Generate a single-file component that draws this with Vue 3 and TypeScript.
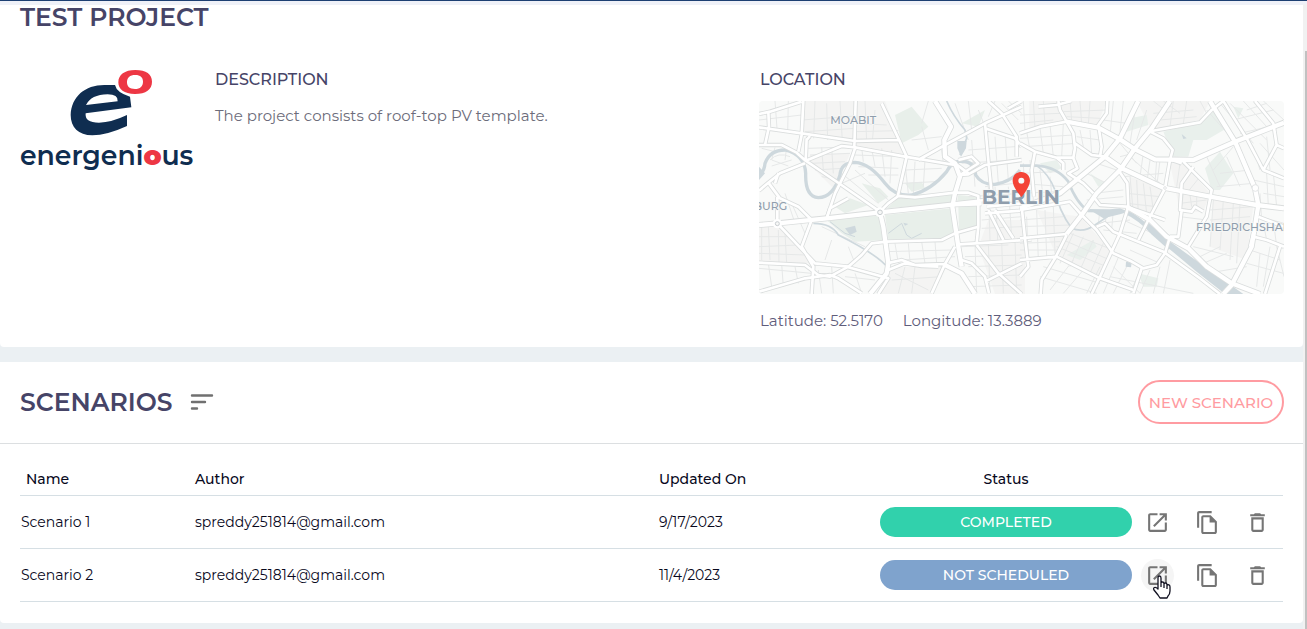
<script setup lang="ts">
interface Scenario {
  name: string
  author: string
  updated: string
  status: string
  tone: string
  active: boolean
}

const scenarios: Scenario[] = [
  { name: 'Scenario 1', author: 'spreddy251814@gmail.com', updated: '9/17/2023', status: 'COMPLETED', tone: 'done', active: false },
  { name: 'Scenario 2', author: 'spreddy251814@gmail.com', updated: '11/4/2023', status: 'NOT SCHEDULED', tone: 'idle', active: true },
]

// Street geometry, split in a western and an eastern sheet.
const westMinor: string[] = [
  'M60 123L66 205M100 123L98 215M180 123L176 235M215 130L218 240M255 123L262 243M12 180L140 165M140 180L300 168M150 215L300 205',
  'M330 123L335 245M360 150L352 245M300 190L395 195M300 215L430 212M20 265L60 275M60 262L50 300L100 318M95 262L90 300M45 300Q70 275 105 290M50 318L110 300',
  'M160 265L250 262M165 285L285 280M200 262L205 330M230 262L235 340M170 310L270 305M180 330L262 325M320 262L325 305M350 265L360 320M380 265L390 350M410 270L405 370M300 285L440 290M310 320L430 325M340 345L430 345',
  'M200 350L260 360M260 340L370 430M300 330L400 420M260 370L330 340M450 310L460 400M480 305L475 400M510 300L505 380M450 330L560 325M440 370L540 365',
  'M20 500L20 600M40 500L45 600M70 510L72 610M90 520L95 610M12 530L110 530M12 560L130 555M12 580L150 585M110 430L150 520M90 400L120 490',
  'M200 500L330 560M230 540L210 600M280 560L300 610M12 625L170 640M40 610L50 680M80 612L85 680M120 620L130 670M190 630L200 700M230 620L235 700M300 640L320 700M270 650L360 660',
  'M420 550L430 610M460 550L465 605M500 545L510 610M540 545L545 610M390 575L590 570M420 640L520 690M450 620L430 700M480 620L470 700M410 660L560 650M440 600L600 590',
  'M620 560L760 555M630 590L800 585M640 620L800 615M660 550L665 700M700 545L705 700M740 545L745 700M780 540L785 700M640 650L800 645M640 680L800 675',
  'M640 410L800 400M700 380L705 540M720 380L728 540M760 380L770 530M680 430L800 425M680 480L800 470M680 505L800 500M690 380L780 370M620 310L780 300M640 270L780 260M650 240L660 380M720 230L730 370M750 220L760 360',
  'M640 123L650 210M670 150L690 200M600 130L640 240M720 123L700 170M740 130L790 180M760 123L800 160M560 270L565 310M500 200L520 270M470 240L560 230M520 123L500 190',
]
const eastMinor: string[] = [
  'M10 123L15 215M40 123L45 205M70 123L75 195M0 165L120 160M0 190L100 180M150 123L155 180M180 123L185 190M210 123L205 195M130 155L260 150M140 170L240 175M280 123L270 225M310 123L300 215M250 180L320 190',
  'M20 215L30 270M60 205L70 280M90 195L100 290M130 190L125 290M0 235L160 225M10 260L170 250M180 210L190 260M210 210L215 280M170 230L240 240M350 123L330 250M380 150L350 240M400 123L440 155M430 123L480 160M400 160L520 150M420 180L530 170M460 123L450 200M500 123L490 190M540 123L560 160',
  'M300 250L350 310M330 290L420 370M370 280L360 350M390 300L380 370M420 300L410 380M300 290L340 280M310 350L430 340M230 310L290 330M200 340L260 370M170 350L230 400M330 350L340 460M350 360L355 460M370 370L380 460M390 380L400 450M320 400L420 410M320 430L410 440',
  'M10 310L15 420M30 300L40 420M60 330L70 420M90 350L95 400M0 340L110 335M0 370L130 380M0 400L110 395M20 470L25 600M50 450L55 600M75 450L80 590M100 440L105 580M0 480L130 470M0 500L150 495M0 550L120 545M0 570L110 570',
  'M120 610L160 520M150 620L190 530M180 630L220 540M210 640L250 550M110 560L260 620M130 540L270 600M150 520L280 570M70 620L240 670M60 650L230 700M90 690L160 600M130 700L190 630M200 700L240 620',
  'M240 450L235 490M260 450L255 500M280 450L275 510M200 420L310 410M220 400L310 390M240 490L330 480M250 510L350 520M310 480L420 530M330 570L420 610M280 620L360 700M300 580L250 700M330 600L280 700M360 630L330 700M390 630L360 700M420 620L400 700M450 600L430 700M270 650L520 700',
  'M410 300L405 370M480 310L470 380M510 330L480 390M540 350L500 400M490 400L485 440M510 405L515 440M530 410L530 450M480 430L560 420M480 470L560 480M580 420L570 560M610 420L600 570M640 430L630 600M660 430L650 610M570 450L700 440M570 480L690 470',
  'M590 380L700 370M600 340L690 330M580 330L640 260M620 290L660 380M650 270L690 360M560 290L600 380M560 150L640 240M600 130L700 250M630 130L740 240M670 123L740 200M700 123L770 200M730 123L792 180M680 150L740 130M640 180L760 150M660 220L790 190M700 260L720 330M720 250L792 330M740 230L750 330',
  'M720 400L725 480M740 340L745 440M760 340L770 440M700 360L792 380M730 400L792 410M720 470L792 490M730 490L740 540M760 480L770 560M720 580L710 680M750 560L730 680M770 560L792 650M690 570L780 600M680 610L790 640M520 560L640 590M540 590L600 560M550 610L620 580M560 640L680 620',
]
const westMajor: string[] = [
  'M12 162L45 155L140 125M40 155L42 200L30 255M12 202L140 220L300 243L435 240M145 123L140 225L130 275M302 123L298 260M380 130L430 235L455 290L428 410',
  'M12 255L80 255L125 278L152 302L255 372L375 455M152 302L155 235M165 228L155 240M152 302L260 258L300 262L450 290L600 315M300 265L285 310L240 400L215 475M490 300L570 255L690 190L800 140',
  'M12 392L40 368L75 340L150 310M40 368L75 415L130 440L170 480L140 560L175 620L170 702M70 340L60 370M67 410L67 490L180 610L280 620M215 475L225 445L280 415',
  'M395 545L350 550L320 585L280 620L225 650L190 645L150 615L12 608M12 695L150 655L225 645L250 655L320 700M280 622L400 655L370 702M395 545L560 540L600 520L670 500',
  'M395 610L440 600L480 615L570 612L600 560M400 630L450 610L500 618L550 620M570 612L530 700M610 553L700 548L830 538M620 600L650 610L690 650L702 700M665 555L730 640L800 702M690 665L800 610',
  'M375 455L400 430L430 408L480 412L600 398L640 398L670 408L670 500L665 550M600 430L690 420M695 440L800 430M690 460L800 452M700 450L745 540M720 450L775 535',
  'M615 345L640 343L690 315L800 300M610 300L650 290L670 310L615 345M690 190L700 300L710 400M690 205L720 215L780 235L800 260M700 123L740 160L785 230L785 290M760 145L800 123M640 340L600 310',
]
const westWide: string[] = [
  'M12 495L70 490L215 475L375 457L600 433L680 430',
  'M375 457L385 500L400 610L395 640L345 702M540 123L588 200L568 240L570 290L600 310L615 350L600 400L592 440L610 560L620 620',
  'M570 615L620 640L660 702',
]
const eastMajor: string[] = [
  'M0 220L60 200L140 185M55 140L110 135L155 123M115 123L120 150L160 220L165 265L160 293L110 293M0 250L45 275L110 293L130 310L130 330M45 275L35 330L42 410M262 123L260 160L235 195L245 260L240 290M165 250L215 285L255 290M160 295L172 325L145 340L190 370L220 400',
  'M0 450L120 430L150 425L185 465M185 465L230 510L280 580L330 602L370 625L410 615L435 580L450 530M220 410L240 435L320 440L435 480M295 330L322 370L325 440L300 520L240 650L215 702',
  'M230 500L255 490L280 515L430 575L540 655L600 702M0 600L110 590L240 655L340 690M140 525L105 595L65 660L62 702M0 535L140 522M5 440L15 535L25 620L0 650',
  'M390 215L430 235L458 270L450 300L435 385L385 480L355 540M490 305L575 390L560 470L505 560M485 450L475 530L450 530M455 300L485 310M520 320L485 370L480 450L515 455L525 440L550 455',
  'M395 213L540 187L575 150L610 123M610 123L680 235L730 330L792 355M730 330L770 255L792 265M705 123L760 190L770 255M715 470L740 480L792 500M700 530L740 540L792 560M780 560L735 702M710 480L690 560M500 560L530 590M365 625L340 700',
]
const eastWide: string[] = [
  'M0 445L120 400L255 290L300 235L355 123M140 522L185 465L230 400L300 330L345 265L395 205L450 123',
  'M140 185L235 203L300 238L345 268L405 298L520 300L645 245L792 188',
  'M255 290L305 325L430 383L570 410L710 435L792 445M570 123L580 140L645 245L705 385L715 435L695 560L635 675L610 702',
  'M320 440L390 480L440 530L505 565L560 620L635 670L720 702',
]

const copyPath = 'M16 1H4c-1.100 0-2 .9-2 2v14h2V3h12V1zm-1 4l6 6v10c0 1.100-.9 2-2 2H7.990C6.890 23 6 22.100 6 21l.01-14c0-1.100.89-2 1.990-2h7z'
</script>

<template>
  <div class="page">
    <div class="topline"></div>
    <main class="content">
      <section class="card project">
        <h1 class="title">TEST PROJECT</h1>
        <div class="details">
          <svg class="logo" viewBox="0 0 555 345" role="img" aria-label="energenious">
            <path fill="#0f2d50" fill-rule="evenodd" d="M300 75Q305 98 345 110L349 142L212 160Q208 188 252 188Q290 187 336 165V198Q275 226 232 226C190 226 167 201 167 165C169 110 210 75 268 75ZM213 135L308 124Q310 103 278 103Q228 104 213 135Z" />
            <path fill="#ed3744" fill-rule="evenodd" d="M361 30C394 30 411 43 411 65C411 88 393 102 360 102C327 102 310 88 310 67C310 44 329 30 361 30ZM361 45C344 45 336 53 336 67C336 80 344 87 360 87C376 87 384 78 384 65C384 52 376 45 361 45Z" />
            <text class="wordmark" x="275" y="316" text-anchor="middle">energeni<tspan class="wordmark-o">o</tspan>us</text>
          </svg>
          <div class="description">
            <h2 class="label">DESCRIPTION</h2>
            <p class="copy">The project consists of roof-top PV template.</p>
          </div>
          <div class="location">
            <h2 class="label">LOCATION</h2>
            <svg class="map" viewBox="0 0 1575 579" preserveAspectRatio="xMidYMid slice" role="img" aria-label="Map of Berlin">
              <rect width="1575" height="579" fill="#f9faf9" />
              <g transform="translate(-12 -123)">
                <path fill="#f4f4f3" d="M140 123H300V240L140 220ZM12 500L70 495L175 610L12 605ZM300 123H390L450 290L300 260ZM400 620L570 620L530 702H370ZM700 480H810V702H720L670 560ZM165 285L285 280L240 390L160 310Z" />
                <path fill="#e8efea" d="M420 165L470 140L520 200L490 225L440 250ZM240 440L285 415L340 435L270 460ZM215 480L370 465L390 540L300 545L260 520ZM390 465L590 445L600 520L560 535L400 540ZM610 440L668 435V495L612 515ZM440 405L600 400L595 428L395 445ZM610 405L665 410V425L605 430ZM320 370L375 385L400 410L370 430ZM620 190L690 150L670 200ZM450 370L500 365L510 385L470 395Z" />
                <g fill="none" stroke="#e6e8e8" stroke-width="3"><path v-for="d in westMinor" :key="d" :d="d" /></g>
                <g fill="none" stroke="#ced8dd" stroke-linejoin="round">
                  <path stroke-width="10" d="M12 345Q28 335 30 310Q45 270 90 270Q150 285 152 340Q150 410 190 413Q235 412 255 345Q258 307 300 307Q345 310 390 370Q420 410 470 405Q530 390 575 335Q590 303 620 303Q660 305 662 345Q680 375 720 373Q770 365 795 330" />
                  <path stroke-width="5" d="M575 123Q595 170 630 210L635 235L615 285M175 490Q230 490 250 525Q370 585 400 625" />
                  <path stroke-width="3" d="M225 485L270 520L300 530M400 520L440 490L455 525L470 535L500 520" />
                  <path fill="#ced8dd" stroke="none" d="M607 243H635L633 265L618 290L607 265ZM12 320L30 340L12 360ZM270 505L300 497L305 515L285 525ZM445 488L460 492L450 497Z" />
                </g>
                <g fill="none" stroke="#dadddd" stroke-width="13" stroke-linejoin="round"><path v-for="d in westMajor" :key="d" :d="d" /></g>
                <g fill="none" stroke="#dadddd" stroke-width="18" stroke-linejoin="round"><path v-for="d in westWide" :key="d" :d="d" /></g>
                <g fill="none" stroke="#fff" stroke-width="8" stroke-linejoin="round"><path v-for="d in westMajor" :key="d" :d="d" /></g>
                <g fill="none" stroke="#fff" stroke-width="13" stroke-linejoin="round"><path v-for="d in westWide" :key="d" :d="d" /></g>
                <g fill="#f7f8f7" stroke="#fff" stroke-width="12"><circle cx="375" cy="457" r="9" /><circle cx="67" cy="491" r="8" /></g>
                <g fill="#f7f8f7" stroke="#c8cdd0" stroke-width="3"><circle cx="375" cy="457" r="7" /><circle cx="67" cy="491" r="6" /></g>
              </g>
              <g transform="translate(783 -123)">
                <path fill="#f4f4f3" d="M28 123H260L230 200L140 185L28 210ZM350 123H570L540 180L395 210ZM330 350L430 385L390 470L325 440ZM50 450L180 470L280 580L240 650L110 590ZM450 310L490 310L570 400L550 455H480ZM580 410L700 435L680 600L570 560Z" />
                <path fill="#e9f0ec" d="M430 215L545 187L585 150L620 205L560 240L520 240L505 290H460ZM330 175L380 165L385 195L320 215ZM555 325L600 275L640 340L600 390H575ZM60 310L110 300L125 325L90 340ZM355 640L415 655L410 680L370 680ZM210 340L255 370L235 380ZM640 140L670 145L655 175ZM140 585L220 540L230 560L180 600Z" />
                <g fill="none" stroke="#e6e8e8" stroke-width="3"><path v-for="d in eastMinor" :key="d" :d="d" /></g>
                <g fill="none" stroke="#ced8dd">
                  <path stroke-width="8" d="M0 317H50Q110 320 145 365Q170 430 205 453L315 455" />
                  <path stroke-width="5" d="M50 317Q85 340 105 390Q115 450 155 505Q190 520 225 495L285 455" />
                  <path stroke-width="12" d="M315 455Q360 475 400 520L450 565" />
                </g>
                <path fill="#ced8dd" d="M205 447L270 448L300 445L325 455L300 463L250 475ZM375 480L455 548L540 610L670 702H615L530 635L440 560L370 495ZM318 605L335 608L333 622L317 620ZM485 222L500 235L490 237Z" />
                <g fill="none" stroke="#dadddd" stroke-width="13" stroke-linejoin="round"><path v-for="d in eastMajor" :key="d" :d="d" /></g>
                <g fill="none" stroke="#dadddd" stroke-width="18" stroke-linejoin="round"><path v-for="d in eastWide" :key="d" :d="d" /></g>
                <g fill="none" stroke="#fff" stroke-width="8" stroke-linejoin="round"><path v-for="d in eastMajor" :key="d" :d="d" /></g>
                <g fill="none" stroke="#fff" stroke-width="13" stroke-linejoin="round"><path v-for="d in eastWide" :key="d" :d="d" /></g>
                <g fill="#fff" stroke="#e3e5e6" stroke-width="3"><circle cx="435" cy="384" r="4" /><circle cx="706" cy="384" r="10" /></g>
              </g>
              <g class="places">
                <text x="214" y="68">MOABIT</text>
                <text x="-16" y="326">BURG</text>
                <text x="1311" y="389">FRIEDRICHSHAIN</text>
                <text class="city" x="668" y="309">BERLIN</text>
              </g>
              <path fill="#f44336" fill-rule="evenodd" d="M787 213C772 213 761 224 761 239C761 259 787 288 787 288C787 288 813 259 813 239C813 224 802 213 787 213ZM787 230A9 9 0 1 1 787 248A9 9 0 1 1 787 230Z" />
            </svg>
            <div class="coords"><span>Latitude: 52.5170</span><span>Longitude: 13.3889</span></div>
          </div>
        </div>
      </section>

      <section class="card scenarios">
        <header class="bar">
          <h2 class="title">SCENARIOS</h2>
          <button class="icon sort" type="button" aria-label="Sort scenarios">
            <svg width="24" height="24" viewBox="0 0 24 24" fill="none" stroke="#707070" stroke-width="2.400" stroke-linecap="round"><path d="M2 5.500H22M2 12H15M2 18.500H7" /></svg>
          </button>
          <button class="new" type="button">NEW SCENARIO</button>
        </header>
        <div class="table-wrap">
          <table>
            <colgroup><col class="c-name" /><col class="c-author" /><col class="c-date" /><col class="c-status" /><col class="c-actions" /></colgroup>
            <thead>
              <tr><th class="first">Name</th><th>Author</th><th>Updated On</th><th class="center">Status</th><td></td></tr>
            </thead>
            <tbody>
              <tr v-for="s in scenarios" :key="s.name">
                <td>{{ s.name }}</td>
                <td>{{ s.author }}</td>
                <td>{{ s.updated }}</td>
                <td><span class="pill" :class="s.tone">{{ s.status }}</span></td>
                <td>
                  <div class="actions">
                    <button class="icon round" :class="{ active: s.active }" type="button" :aria-label="'Open ' + s.name">
                      <svg width="25" height="25" viewBox="0 0 24 24" fill="#757575"><path d="M19 19H5V5h7V3H5c-1.110 0-2 .9-2 2v14c0 1.100.89 2 2 2h14c1.100 0 2-.9 2-2v-7h-2v7zM14 3v2h3.590l-9.830 9.830 1.410 1.410L19 6.410V10h2V3h-7z" /></svg>
                      <svg v-if="s.active" class="cursor" width="20" height="25" viewBox="0 0 20 25"><path fill="#fff" stroke="#101020" stroke-width="1.300" stroke-linejoin="round" d="M6 14V3Q6 1 7.500 1Q9 1 9 3V10V7.500Q12 6 12 9V11V8.500Q15 7 15 10V12V10Q18 9 18 12V16Q18 19 16 21L15 23H8L6 20L2 15Q1 13 2.500 12.500Q4 12 6 14ZM9 10V12M12 11V13M15 12V14" /></svg>
                    </button>
                    <button class="icon round" type="button" :aria-label="'Duplicate ' + s.name">
                      <svg width="25" height="25" viewBox="0 0 24 24" fill="#757575"><path fill-rule="evenodd" :d="copyPath + 'M8 7V21H19V12H14V7Z'" /></svg>
                    </button>
                    <button class="icon round" type="button" :aria-label="'Delete ' + s.name">
                      <svg width="25" height="25" viewBox="0 0 24 24" fill="#757575"><path d="M6 19c0 1.100.9 2 2 2h8c1.100 0 2-.9 2-2V7H6v12zM8 9h8v10H8V9zm7.500-5l-1-1h-5l-1 1H5v2h14V4h-3.500z" /></svg>
                    </button>
                  </div>
                </td>
              </tr>
            </tbody>
          </table>
        </div>
      </section>
    </main>
    <div class="scroll-track"><div class="scroll-thumb"></div></div>
  </div>
</template>

<style>
body {
  margin: 0;
  background: #ebf0f3;
}
</style>

<style scoped>
.page {
  position: relative;
  min-height: 100vh;
  overflow: hidden;
  background: #ebf0f3;
  color: #08081c;
  font-family: Montserrat, Inter, "Liberation Sans", sans-serif;
  font-size: 14px;
  line-height: 20px;
}
.topline {
  height: 4px;
  border-top: 1px solid #1d3f72;
  background: #eff1f8;
}
.content {
  display: flex;
  flex-direction: column;
  gap: 15px;
  margin-right: 4px;
}
.card {
  background: #fff;
  border-radius: 0 0 4px 4px;
}
h1, h2, p { margin: 0; }
.title {
  color: #464467;
  font-size: 25px;
  font-weight: 600;
  line-height: 32px;
}
.project {
  margin-top: -4px;
  padding: 0 19px 16px 20px;
  background: linear-gradient(#eff1f8 4px, #fff 4px);
}
.details {
  display: grid;
  grid-template-columns: 174px minmax(0, 525fr) minmax(0, 525fr);
  column-gap: 20px;
  margin-top: 35px;
}
.logo {
  width: 185px;
  height: 115px;
  margin: -8px 0 0 -5px;
}
.wordmark {
  fill: #0f2d50;
  font-size: 80px;
  font-weight: 600;
}
.wordmark-o {
  fill: #ed3744;
  font-weight: 900;
}
.location { min-width: 0; }
.label, .copy, .coords { padding-left: 1px; }
.label {
  color: #464467;
  font-size: 16px;
  font-weight: 500;
  line-height: 24px;
}
.copy {
  margin-top: 14px;
  color: #6c6c7a;
  font-size: 15px;
  font-weight: 400;
  line-height: 20px;
}
.map {
  display: block;
  width: 100%;
  height: 193px;
  margin-top: 9px;
  border-radius: 4px;
}
.places {
  fill: #8f9dac;
  stroke: #f7f8f7;
  stroke-width: 4px;
  paint-order: stroke;
  font-size: 33px;
  font-weight: 500;
}
.city {
  font-size: 60px;
  font-weight: 700;
}
.coords {
  display: flex;
  gap: 20px;
  margin-top: 17px;
  color: #5f5d7b;
  font-size: 15px;
  font-weight: 400;
}
.bar {
  display: flex;
  align-items: center;
  height: 80px;
  padding: 0 19px 1px 20px;
  border-bottom: 1px solid #dcdfe1;
}
.icon {
  display: flex;
  align-items: center;
  justify-content: center;
  padding: 0;
  border: 0;
  background: transparent;
}
.sort { margin-left: 18px; }
.new {
  width: 146px;
  height: 44px;
  margin-left: auto;
  padding: 0;
  border: 2px solid #ff9ba1;
  border-radius: 22px;
  background: transparent;
  color: #ff9ba1;
  font-family: inherit;
  font-size: 15px;
  font-weight: 500;
}
.table-wrap { padding: 19px 20px 21px; }
table {
  width: 100%;
  border-collapse: collapse;
  table-layout: fixed;
}
.c-name { width: 174px; }
.c-date { width: 221px; }
.c-status { width: 254px; }
.c-actions { width: 150px; }
tr { border-bottom: 1px solid #d6dfe4; }
th, td {
  height: 52px;
  padding: 0 1px;
  font-weight: 400;
  text-align: left;
}
thead th, thead td {
  height: 32px;
  font-weight: 500;
}
th.first { padding-left: 6px; }
th.center { text-align: center; }
.pill {
  display: block;
  border-radius: 15px;
  color: #fff;
  font-weight: 500;
  line-height: 30px;
  text-align: center;
}
.done { background: #31d1ac; }
.idle { background: #7fa3cd; }
.actions {
  display: flex;
  gap: 17px;
  padding-left: 7px;
}
.round {
  position: relative;
  width: 33px;
  height: 33px;
  border-radius: 50%;
}
.active { background: #f5f5f5; }
.cursor {
  position: absolute;
  left: 11px;
  top: 16px;
}
.scroll-track {
  position: absolute;
  top: 4px;
  right: 0;
  bottom: 0;
  width: 4px;
  background: #f1f1f1;
}
.scroll-thumb {
  height: 100%;
  margin: 47px 0 0 2px;
  background: #c1c1c1;
}
</style>
